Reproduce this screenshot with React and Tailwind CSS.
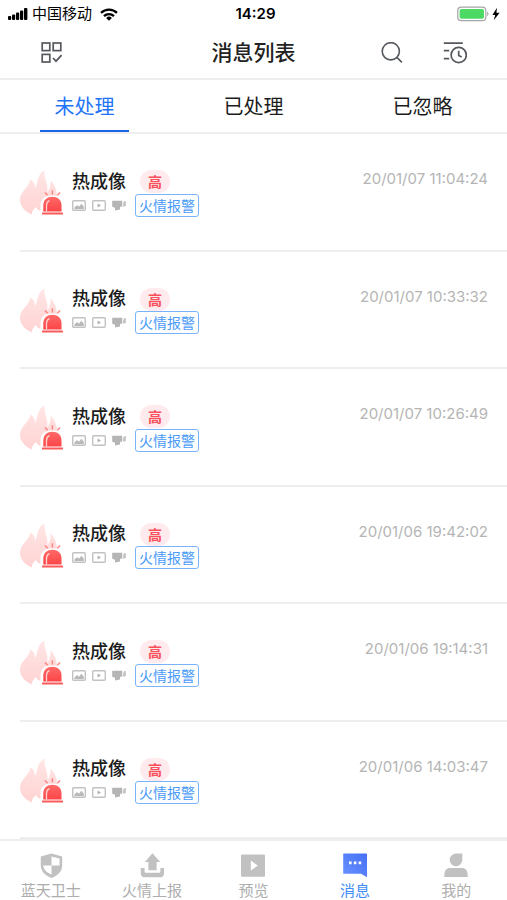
import React, { useState } from 'react';

const MESSAGES = [
  '20/01/07 11:04:24',
  '20/01/07 10:33:32',
  '20/01/07 10:26:49',
  '20/01/06 19:42:02',
  '20/01/06 19:14:31',
  '20/01/06 14:03:47',
];

const TABS = ['未处理', '已处理', '已忽略'];

function SignalIcon() {
  return (
    <svg width="20" height="12" viewBox="0 0 20 12" fill="#000" aria-hidden="true">
      <rect x="0" y="8" width="3.200" height="4" rx="1" />
      <rect x="4" y="6.500" width="3.200" height="5.500" rx="1" />
      <rect x="8" y="4.500" width="3.200" height="7.500" rx="1" />
      <rect x="12" y="2.500" width="3.200" height="9.500" rx="1" />
      <rect x="16" y="0" width="3.400" height="12" rx="1" />
    </svg>
  );
}

function WifiIcon() {
  return (
    <svg width="18" height="13" viewBox="0 0 18 13" fill="none" stroke="#000" strokeWidth="2.300" aria-hidden="true">
      <path d="M1 4.900a11.400 11.400 0 0 1 16 0" />
      <path d="M4 8.100a7.100 7.100 0 0 1 10 0" />
      <path d="M9 12.800 6.100 9.900a4.100 4.100 0 0 1 5.800 0z" fill="#000" stroke="none" />
    </svg>
  );
}

function BatteryIcon() {
  return (
    <svg width="46" height="16" viewBox="0 0 46 16" aria-hidden="true">
      <rect x="0.800" y="1.200" width="28" height="13.400" rx="3.400" fill="#fff" stroke="#a5a5a5" strokeWidth="1.200" />
      <rect x="2.600" y="3" width="24.400" height="9.800" rx="1.800" fill="#4cd964" />
      <path d="M30.200 5.800c1.800.4 1.800 3.800 0 4.200z" fill="#a5a5a5" />
      <path d="M40 1.800 35.400 9h2.800l-1.400 5.200 5.800-7.400h-3.200z" fill="#000" />
    </svg>
  );
}

function SelectGridIcon() {
  return (
    <svg width="22" height="22" viewBox="0 0 22 22" fill="none" stroke="#55585e" strokeWidth="1.700" aria-hidden="true">
      <rect x="2.200" y="1" width="7.600" height="7.600" />
      <rect x="13.200" y="1" width="7.600" height="7.600" />
      <rect x="2.200" y="12.400" width="7.600" height="7.600" />
      <path d="m13 16 3 3.200 5.600-6" />
    </svg>
  );
}

function SearchIcon() {
  return (
    <svg width="22" height="22" viewBox="0 0 22 22" fill="none" stroke="#55585e" strokeWidth="1.600" aria-hidden="true">
      <circle cx="9.800" cy="9.300" r="8.600" />
      <path d="m15.900 15.400 5 5" />
    </svg>
  );
}

function HistoryIcon() {
  return (
    <svg width="24" height="22" viewBox="0 0 24 22" fill="none" stroke="#55585e" strokeWidth="1.700" aria-hidden="true">
      <path d="M.8 1.200h19M.8 8.700h5.400M.8 16.700h5.400" />
      <circle cx="15.700" cy="13" r="7.600" />
      <path d="M15.700 8.800v4.600l3 1.600" />
    </svg>
  );
}

function FireAlarmIcon() {
  return (
    <svg className="shrink-0" width="44" height="46" viewBox="0 0 44 46" aria-hidden="true">
      <defs>
        <linearGradient id="flame" x1="0" y1="0" x2="0" y2="1">
          <stop offset="0" stopColor="#ffe6e5" />
          <stop offset="1" stopColor="#ffd3d3" />
        </linearGradient>
        <linearGradient id="siren" x1="0" y1="0" x2="0" y2="1">
          <stop offset="0" stopColor="#ff6a67" />
          <stop offset="1" stopColor="#fb4548" />
        </linearGradient>
      </defs>
      <path
        d="M12 44.500C4.500 41.500 0 36 0 29.500 0 21 8.500 18.500 10.400 9.400c3.600 2 4.800 5.200 4.400 8.800C18.200 13 16.800 4 24.600.4c-.8 5.800 1.400 9.600 2.400 14.600.6 3 .6 5 .4 8 1.600-3.400 3.800-7.600 3.200-12.400 4 3.800 6.600 10 6.400 16.400L24 38l-4 2.500c-1.500.4-3-1-3.800-3.500-2.700 2-4.700 4.500-4.200 7.500z"
        fill="url(#flame)"
      />
      <path d="M20.500 44.800V35c0-6.500 5-9.600 12-9.600s11 3.100 11 9.600v9.800z" fill="#fff" />
      <path d="M32.400 20.200v4.400M25 22.400l2.600 2.800M40 22.400l-2.600 2.800" stroke="#ff8583" strokeWidth="1.500" fill="none" />
      <path d="M23.300 41.600v-6.200c0-5.200 3.900-8.600 9.100-8.600s9.100 3.400 9.100 8.600v6.200z" fill="url(#siren)" />
      <path d="M26.500 41.600v-6.200c0-2.400 1.100-4 3-4.800" stroke="#ffd2d0" strokeWidth="1.300" fill="none" />
      <rect x="22" y="42.500" width="21" height="2.100" rx=".5" fill="#fb5a5a" />
    </svg>
  );
}

function ImageIcon() {
  return (
    <svg width="14" height="11" viewBox="0 0 14 11" aria-hidden="true">
      <rect x=".7" y=".7" width="12.600" height="9.600" rx="1" fill="none" stroke="#c2c2c2" strokeWidth="1.400" />
      <path d="M2.400 8.900V7.600L5.200 5l1.700 1.800 2.500-3 2.400 3v2.100z" fill="#b9b9b9" />
    </svg>
  );
}

function ClipIcon() {
  return (
    <svg width="14" height="11" viewBox="0 0 14 11" aria-hidden="true">
      <rect x=".7" y=".7" width="12.600" height="9.600" rx="1" fill="none" stroke="#c2c2c2" strokeWidth="1.400" />
      <path d="M5.600 3.400v4.200L9 5.500z" fill="#b0b0b0" />
    </svg>
  );
}

function CameraIcon() {
  return (
    <svg width="14" height="11" viewBox="0 0 14 11" fill="#b5b5b5" aria-hidden="true">
      <path d="M.2.800h10v6H8v2.600L3 10.600V7.800L.2 6.800z" />
      <path d="m11 3.600 1-2.400 1.900-.2v4.200l-1.200 1.200H11z" fill="#c4c4c4" />
    </svg>
  );
}

function ShieldIcon() {
  return (
    <svg width="24" height="26" viewBox="0 0 24 26" aria-hidden="true">
      <path d="M12.500.4 23.200 3.600v9c0 5.800-4.400 10.200-10.700 12.400C6.100 22.800 1.800 18.400 1.800 12.600v-9z" fill="#c1c1c1" />
      <path d="M12.500 3.600 20.600 5.600v7h-8.100zM4.200 12.600h8.300v9c-4.700-1.900-7.900-4.900-8.300-9z" fill="#fff" />
    </svg>
  );
}

function UploadIcon() {
  return (
    <svg width="24" height="26" viewBox="0 0 24 26" fill="#c1c1c1" aria-hidden="true">
      <path d="M12.500.2 20.200 9h-3.600v8.200H8.400V9H4.800z" />
      <path d="M.8 15h3.800v3.400c0 .9.500 1.400 1.400 1.400h13c.9 0 1.400-.5 1.400-1.400V15h3.600v5.400c0 2.400-1.500 3.900-4 3.900H4.800c-2.500 0-4-1.500-4-3.900z" />
    </svg>
  );
}

function PreviewIcon() {
  return (
    <svg width="24" height="26" viewBox="0 0 24 26" aria-hidden="true">
      <rect x="0" y="1.400" width="24" height="22.400" rx="1" fill="#c1c1c1" />
      <path d="M9.800 7.600v10l7-5z" fill="#fff" />
    </svg>
  );
}

function MessageIcon() {
  return (
    <svg width="24" height="26" viewBox="0 0 24 26" aria-hidden="true">
      <defs>
        <linearGradient id="bubble" x1="0" y1="1" x2="1" y2="0">
          <stop offset="0" stopColor="#6a92ff" />
          <stop offset="1" stopColor="#4470f4" />
        </linearGradient>
      </defs>
      <path d="M.8.600h22.600a.6.600 0 0 1 .6.600V24.200L18 20.800H.8a.6.600 0 0 1-.6-.6V1.200A.6.600 0 0 1 .8.600z" fill="url(#bubble)" />
      <path d="M6 8.600h2.600v2.600H6zM10.800 8.600h2.600v2.600h-2.600zM15.600 8.600h2.600v2.600h-2.600z" fill="#fff" />
    </svg>
  );
}

function ProfileIcon() {
  return (
    <svg width="24" height="26" viewBox="0 0 24 26" fill="#c1c1c1" aria-hidden="true">
      <path d="M12 .6h6.300v6.200A6.300 6.300 0 1 1 12 .6z" />
      <path d="M6 15h12c3.800 0 5.800 2.600 5.800 8.900H.2C.2 17.600 2.200 15 6 15z" />
    </svg>
  );
}

const NAV = [
  { label: '蓝天卫士', Icon: ShieldIcon },
  { label: '火情上报', Icon: UploadIcon },
  { label: '预览', Icon: PreviewIcon },
  { label: '消息', Icon: MessageIcon, active: true },
  { label: '我的', Icon: ProfileIcon },
];

function StatusBar() {
  return (
    <div className="grid h-7 grid-cols-[1fr_auto_1fr] items-center pr-1 pl-2 text-[15px] leading-5 text-black">
      <div className="flex items-center gap-1">
        <SignalIcon />
        <span>中国移动</span>
        <span className="pl-1"><WifiIcon /></span>
      </div>
      <span className="font-semibold">14:29</span>
      <div className="flex justify-end">
        <BatteryIcon />
      </div>
    </div>
  );
}

function MessageRow({ time }) {
  return (
    <li className="ml-5 flex min-h-28 flex-1 items-start border-b-2 border-[#eeeeee] pt-9">
      <FireAlarmIcon />
      <div className="ml-2 flex flex-col">
        <div className="flex h-[23px] items-center gap-[14px]">
          <h2 className="text-[18px] leading-6 font-medium text-[#1c1c1c]">热成像</h2>
          <span className="flex h-[23px] items-center rounded-full bg-[#ffebed] px-2 text-[14px] font-bold text-[#f9505c]">高</span>
        </div>
        <div className="flex h-6 items-center gap-[6px]">
          <ImageIcon />
          <ClipIcon />
          <CameraIcon />
          <span className="ml-[3px] flex h-[23px] items-center rounded-[3px] border border-[#79b4fa] px-[3px] text-[14px] text-[#4a9af8]">火情报警</span>
        </div>
      </div>
      <time className="mr-[19px] ml-auto text-[15px] leading-[18px] text-[#b5b5b5]">{time}</time>
    </li>
  );
}

export default function App() {
  const [tab, setTab] = useState(0);
  return (
    <div className="flex min-h-screen flex-col bg-white font-['Inter','Noto_Sans_CJK_SC',sans-serif]">
      <StatusBar />
      <header className="grid h-[52px] grid-cols-[1fr_auto_1fr] items-center border-b-2 border-[#eeeeee] pr-10 pl-10">
        <button type="button" aria-label="批量选择" className="justify-self-start">
          <SelectGridIcon />
        </button>
        <h1 className="text-[21px] leading-8 font-medium text-[#222222]">消息列表</h1>
        <div className="flex items-center justify-end gap-10">
          <button type="button" aria-label="搜索"><SearchIcon /></button>
          <button type="button" aria-label="历史记录"><HistoryIcon /></button>
        </div>
      </header>
      <div role="tablist" className="grid h-[54px] grid-cols-3 border-b-2 border-[#eeeeee]">
        {TABS.map((name, i) => (
          <button
            key={name}
            type="button"
            role="tab"
            aria-selected={tab === i}
            onClick={() => setTab(i)}
            className={
              tab === i
                ? 'mx-10 border-b-2 border-[#1b66e5] pt-1 text-[20px] whitespace-nowrap text-[#1f73f5]'
                : 'mx-10 border-b-2 border-transparent pt-1 text-[20px] whitespace-nowrap text-[#1c1c1c]'
            }
          >
            {name}
          </button>
        ))}
      </div>
      <ul className="flex flex-1 flex-col">
        {MESSAGES.map((time) => (
          <MessageRow key={time} time={time} />
        ))}
      </ul>
      <nav className="grid h-[61px] grid-cols-5 border-t-2 border-[#eeeeee] pt-3">
        {NAV.map(({ label, Icon, active }) => (
          <a
            key={label}
            href="#"
            className={
              active
                ? 'flex flex-col items-center text-[15px] leading-6 text-[#3f8ef7]'
                : 'flex flex-col items-center text-[15px] leading-6 text-[#adadad]'
            }
          >
            <Icon />
            <span>{label}</span>
          </a>
        ))}
      </nav>
    </div>
  );
}
